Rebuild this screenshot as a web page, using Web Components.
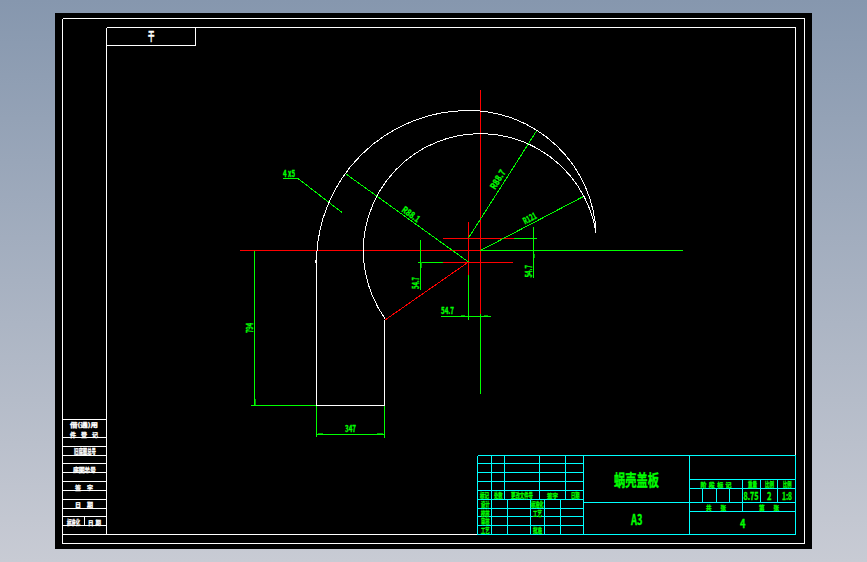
<!DOCTYPE html>
<html lang="zh"><head><meta charset="utf-8">
<style>
html,body{margin:0;padding:0;height:100%;overflow:hidden}
body{display:flex;flex-direction:column;width:867px;height:562px;background:linear-gradient(#8697ae,#c8cbd4);font-family:"Noto Sans CJK SC","Liberation Sans",sans-serif}
</style></head><body>
<cad-sheet>
  <cad-frame></cad-frame>
  <cad-side-table></cad-side-table>
  <cad-part-drawing></cad-part-drawing>
  <cad-title-block></cad-title-block>
</cad-sheet>
<script>
const NS='http://www.w3.org/2000/svg';
const esc=s=>s.replace(/&/g,'&amp;').replace(/</g,'&lt;');
const ln=(c,x1,y1,x2,y2)=>`<line stroke="${c}" x1="${x1}" y1="${y1}" x2="${x2}" y2="${y2}"/>`;
const hv=(c,list)=>list.map(l=>ln(c,...l)).join('');
/* x,y = baseline start; len = squeezed width; sp = width reached by spacing only */
function tx(c,x,y,s,size,len,o={}){
  const rot=o.rot!==undefined?` transform="rotate(${o.rot} ${x} ${y})"`:'';
  const adj=o.sp?'spacing':'spacingAndGlyphs';
  const l=len?` textLength="${len}" lengthAdjust="${adj}"`:'';
  return `<text fill="${c}" stroke="${c}" x="${x}" y="${y}" font-size="${size}"${l}${rot}>${esc(s)}</text>`;
}
const svgCSS=`svg{position:absolute;left:0;top:0;width:757px;height:536px;overflow:visible}
line,path{fill:none;stroke-width:1}
text{font-family:"Noto Sans CJK SC","Liberation Sans",sans-serif;font-weight:700;stroke-width:.3}`;
/* Every child draws on the sheet's canvas: a CAD drawing's geometry is its content. */
class CadCanvas extends HTMLElement{
  connectedCallback(){
    if(this.shadowRoot)return;
    const r=this.attachShadow({mode:'open'});
    r.innerHTML=`<style>:host{display:contents}${svgCSS}</style><svg viewBox="55 13 757 536" xmlns="${NS}" shape-rendering="crispEdges">${this.draw()}</svg>`;
  }
  draw(){return ''}
}
class CadSheet extends HTMLElement{
  constructor(){super();
    this.attachShadow({mode:'open'}).innerHTML=`<style>
    :host{display:block;position:relative;width:757px;height:536px;margin:13px 0 0 55px;background:#000}
    </style><slot></slot>`;}
}
class CadFrame extends CadCanvas{
  draw(){
    const W='#fff';
    return hv(W,[
      [62.5,18.5,804.5,18.5],[62.5,543.5,804.5,543.5],[62.5,18.5,62.5,543.5],[804.5,18.5,804.5,543.5],
      [106.5,27.5,795.5,27.5],[106.5,27.5,106.5,534.5],[62.5,534.5,478,534.5],[795.5,27.5,795.5,456],
      [106.5,45.5,195.5,45.5],[195.5,27.5,195.5,45.5]
    ])+`<text fill="${W}" stroke="${W}" font-size="8" transform="translate(148 41) scale(.8 1.5)">干</text>`;
  }
}
class CadSideTable extends CadCanvas{
  draw(){
    const W='#fff';
    const ys=[419.5,437.5,446.5,455.5,463.5,472.5,481.5,490.5,499.5,508.5,516.5,525.5];
    let s=hv(W,ys.map(y=>[62.5,y,106.5,y]));
    s+=ln(W,84.5,516.5,84.5,525.5);
    s+=tx(W,70,427,'借(通)用',6,28);
    s+=tx(W,70,436.5,'件登记',6,28,{sp:1});
    s+=tx(W,74,453.5,'旧底图总号',7,22);
    s+=tx(W,73,471.5,'底图总号',6,23,{sp:1});
    s+=tx(W,75,489.5,'签字',6,18,{sp:1});
    s+=tx(W,75,506.5,'日期',6,18,{sp:1});
    s+=tx(W,67,524.5,'标准化',7,13);
    s+=tx(W,88,524.5,'日期',5.5,13,{sp:1});
    return s;
  }
}
class CadPartDrawing extends CadCanvas{
  draw(){
    const G='#00ff00',R='#ff0000',W='#fff',D='#00a000';
    let s='';
    s+=hv(R,[[240,250.5,480.5,250.5],[480.5,90,480.5,314],[468.5,222,468.5,275],[443,262.5,513,262.5],[443,238.5,514,238.5],[468.5,262,385,320]]);
    s+=hv(G,[[480.5,250.5,683,250.5],[480.5,314,480.5,394],[468.5,275,468.5,320],[418,262.5,443,262.5],[514,238.5,537,238.5],
      [533.5,227,533.5,278],[420.5,240,420.5,290],[441,316.5,491,316.5],
      [346,174,468.5,262],[468.5,238,536.7,130.7],[480.5,250.5,584.3,196],
      [283,178.5,298,178.5],[298,178.5,342,212.5],
      [254.5,250.5,254.5,405.5],[251,405.5,316.5,405.5],[316.5,405.5,316.5,437],[384.5,405.5,384.5,437.5],[316.5,434.5,384.5,434.5]]);
    /* arrowheads: faint thickening at the dimension ends */
    s+=hv(D,[[255.5,399,255.5,405],[318,433.5,323,433.5],[377,433.5,383,433.5],[421.5,262,421.5,268],[534.5,254,534.5,258],[461,315.5,465,315.5],[484,315.5,488,315.5]]);
    s+=`<path stroke="${W}" d="M316.5 262A152 152 0 0 1 468.5 110.5A127.5 127.5 0 0 1 596 233"/>`;
    s+=`<path stroke="${W}" d="M596 233A117 117 0 1 0 385 318.5"/>`;
    s+=hv(W,[[316.5,262,316.5,405.5],[384.5,320,384.5,405.5],[316.5,405.5,384.5,405.5],[315.5,260,315.5,263]]);
    s+=tx(G,283,177,'4 x5',9,12);
    s+=tx(G,345,432,'347',9,11);
    s+=tx(G,253,333,'794',9,10,{rot:-90});
    s+=tx(G,401,211,'R88.1',9,20,{rot:36});
    s+=tx(G,495,190,'R88.7',9,21,{rot:-58});
    s+=tx(G,525,224.5,'R121',9,14,{rot:-28});
    s+=tx(G,419,289,'54.7',9,12,{rot:-90});
    s+=tx(G,532,277.5,'54.7',9,12.5,{rot:-90});
    s+=tx(G,441,314,'54.7',9,13);
    return s;
  }
}
class CadTitleBlock extends CadCanvas{
  draw(){
    const C='#00ffff',G='#00ff00';
    let s='';
    /* change-record table */
    [455.5,463.5,472.5,481.5,490.5,499.5,508.5,516.5,525.5].forEach(y=>s+=ln(C,477.5,y,583.5,y));
    [477.5,491.5].forEach(x=>s+=ln(C,x,455.5,x,534.5));
    [504.5,539.5,565.5].forEach(x=>s+=ln(C,x,455.5,x,499.5));
    [507.5,530.5,544.5,560.5].forEach(x=>s+=ln(C,x,499.5,x,534.5));
    /* outer and right part */
    s+=hv(C,[[477.5,534.5,795.5,534.5],[583.5,455.5,583.5,534.5],[689.5,455.5,689.5,534.5],[795.5,455.5,795.5,534.5],
      [583.5,455.5,795.5,455.5],[583.5,502.5,795.5,502.5],[689.5,479.5,795.5,479.5],[689.5,488.5,795.5,488.5],[689.5,511.5,795.5,511.5],
      [742.5,479.5,742.5,511.5],[760.5,479.5,760.5,502.5],[777.5,479.5,777.5,502.5],
      [702.5,488.5,702.5,502.5],[716.5,488.5,716.5,502.5],[729.5,488.5,729.5,502.5]]);
    const t=(x,y,str,sz,len,o)=>s+=tx(G,x,y,str,sz,len,o);
    t(480,497.5,'标记',7,9);t(494,497.5,'处数',7,8.5);t(511,497.5,'更改文件号',7,22);
    t(547,497.5,'签字',5.5,11,{sp:1});t(571,497.5,'日期',7,8.5);
    t(481,506.5,'设计',7,8.5);t(481,515.5,'校核',7,8.5);t(481,524,'审核',7,8.5);t(481,533,'工艺',7,8.5);
    t(531,506.5,'标准化',7,12.5);t(533,515.5,'工艺',7,9);t(533,533,'批准',7,9);
    t(614,486,'蜗壳盖板',16,45);
    t(631,525,'A3',15,11.5);
    t(700.5,486.5,'阶段标记',6,31,{sp:1});
    t(748,486.5,'重量',7,9);t(765,486.5,'比例',7,9);t(783,486.5,'比例',7,8.5);
    t(743.5,500,'8.75',10,15);t(767,500,'2',10,4.5);t(782,500,'1:8',10,10);
    t(706,510,'共张',5.5,20,{sp:1});t(759,510,'第张',5.5,20,{sp:1});
    t(740,528,'4',12,5.5);
    return s;
  }
}
customElements.define('cad-sheet',CadSheet);
customElements.define('cad-frame',CadFrame);
customElements.define('cad-side-table',CadSideTable);
customElements.define('cad-part-drawing',CadPartDrawing);
customElements.define('cad-title-block',CadTitleBlock);
</script>
</body></html>
